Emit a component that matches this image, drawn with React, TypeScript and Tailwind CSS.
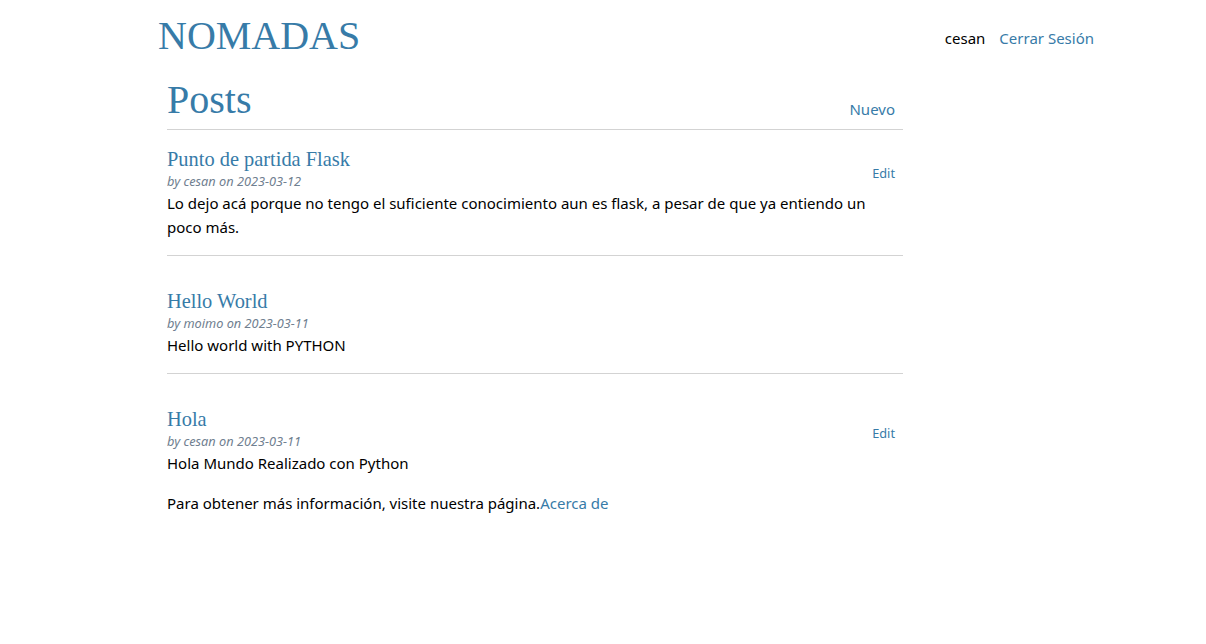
import React from "react"

const serif = "font-['Liberation_Serif','Times_New_Roman',serif]"

type Post = {
  id: number
  title: string
  author: string
  date: string
  body: string
  editable: boolean
  top: string
}

export default function App() {
  const posts: Post[] = [
    {
      id: 1,
      title: "Punto de partida Flask",
      author: "cesan",
      date: "2023-03-12",
      body: "Lo dejo acá porque no tengo el suficiente conocimiento aun es flask, a pesar de que ya entiendo un poco más.",
      editable: true,
      top: "mt-[17px]",
    },
    {
      id: 2,
      title: "Hello World",
      author: "moimo",
      date: "2023-03-11",
      body: "Hello world with PYTHON",
      editable: false,
      top: "mt-[33px]",
    },
    {
      id: 3,
      title: "Hola",
      author: "cesan",
      date: "2023-03-11",
      body: "Hola Mundo Realizado con Python",
      editable: true,
      top: "mt-[33px]",
    },
  ]

  return (
    <div className="min-h-[644px] bg-white font-['Noto_Sans','Open_Sans',sans-serif] text-[15px] text-black">
      <div className="ml-[150px] w-[952px]">
        {/* Nav */}
        <nav className="flex h-[64px] items-center">
          <h1 className={`flex-auto ${serif} pl-[8px] pt-[8px] text-[40px] leading-[48px] text-[#377ba8]`}>
            NOMADAS
          </h1>
          <ul className="flex items-center pt-[12px]">
            <li>
              <span className="block py-2 pr-[6px] pl-2">cesan</span>
            </li>
            <li>
              <a href="#" className="block p-2 text-[#377ba8]">
                Cerrar Sesión
              </a>
            </li>
          </ul>
        </nav>

        <main className="ml-[17px] w-[736px]">
          <header className="flex items-end border-b border-[#d3d3d3]">
            <h1 className={`flex-auto ${serif} mt-[12px] mb-[5px] text-[40px] leading-[48px] text-[#377ba8]`}>
              Posts
            </h1>
            <a href="#" className="block px-2 pt-2 pb-[9px] leading-[22px] text-[#377ba8]">
              Nuevo
            </a>
          </header>

          {posts.map((post, i) => (
            <div key={post.id}>
              <article className={post.top}>
                <header className="flex items-end">
                  <div className="flex-auto">
                    <h1 className={`${serif} text-[20.4px] leading-[24px] text-[#377ba8]`}>{post.title}</h1>
                    <div className="text-[12.75px] italic leading-[20px] text-[#708090]">
                      by {post.author} on {post.date}
                    </div>
                  </div>
                  {post.editable && (
                    <a href="#" className="mb-[1px] block p-2 text-[12.75px] leading-[18px] text-[#377ba8]">
                      Edit
                    </a>
                  )}
                </header>
                <p className="pr-[20px] leading-[24px]">{post.body}</p>
              </article>
              {i < posts.length - 1 && <hr className="mt-[16px] border-0 border-t border-[#d3d3d3]" />}
            </div>
          ))}

          <p className="mt-[16px] leading-[24px]">
            Para obtener más información, visite nuestra página.
            <a href="#" className="text-[#377ba8]">
              Acerca de
            </a>
          </p>
        </main>
      </div>
    </div>
  )
}
